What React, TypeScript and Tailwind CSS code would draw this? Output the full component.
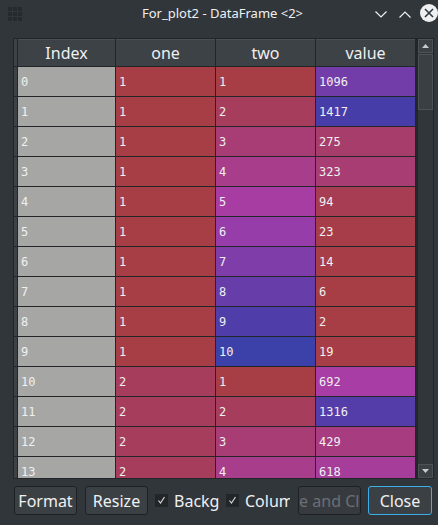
import React from 'react';

type Row = { idx: number; one: number; two: number; value: number };

const rows: Row[] = [
  { idx: 0, one: 1, two: 1, value: 1096 },
  { idx: 1, one: 1, two: 2, value: 1417 },
  { idx: 2, one: 1, two: 3, value: 275 },
  { idx: 3, one: 1, two: 4, value: 323 },
  { idx: 4, one: 1, two: 5, value: 94 },
  { idx: 5, one: 1, two: 6, value: 23 },
  { idx: 6, one: 1, two: 7, value: 14 },
  { idx: 7, one: 1, two: 8, value: 6 },
  { idx: 8, one: 1, two: 9, value: 2 },
  { idx: 9, one: 1, two: 10, value: 19 },
  { idx: 10, one: 2, two: 1, value: 692 },
  { idx: 11, one: 2, two: 2, value: 1316 },
  { idx: 12, one: 2, two: 3, value: 429 },
  { idx: 13, one: 2, two: 4, value: 618 },
];

// min / max of each column over the whole frame
const ranges = { one: [1, 10], two: [1, 10], value: [1, 1524] } as const;

function hsvToRgb(h: number, s: number, v: number): [number, number, number] {
  const i = Math.floor(h * 6);
  const f = h * 6 - i;
  const p = v * (1 - s);
  const q = v * (1 - f * s);
  const t = v * (1 - (1 - f) * s);
  switch (i % 6) {
    case 0: return [v, t, p];
    case 1: return [q, v, p];
    case 2: return [p, v, t];
    case 3: return [p, q, v];
    case 4: return [t, p, v];
    default: return [v, p, q];
  }
}

// same hue scale as the dataframe editor: largest = blue, smallest = red
const cellColor = (v: number, min: number, max: number) => {
  const hue = 0.66 + (0.33 * (max - v)) / (max - min);
  const [r, g, b] = hsvToRgb(hue, 0.7, 1);
  const mix = (c: number, base: number) => Math.round(c * 255 * 0.6 + base * 0.4);
  return `rgb(${mix(r, 35)}, ${mix(g, 38)}, ${mix(b, 41)})`;
};

const mono = { fontFamily: '"DejaVu Sans Mono", monospace' };

const Cell = ({ text, bg }: { text: number; bg?: string }) => (
  <div
    className="flex items-center pl-[3px] text-[12px] text-[#eff0f1] bg-[#a6a7a5]"
    style={{ ...mono, ...(bg ? { backgroundColor: bg } : {}) }}
  >
    {text}
  </div>
);

const Button = ({ label, w, focus, disabled }: { label: string; w: string; focus?: boolean; disabled?: boolean }) => (
  <div
    className={`${w} h-[29px] shrink-0 flex items-center justify-center overflow-hidden whitespace-nowrap rounded-[3px] border text-[16px] ${
      focus ? 'border-[#3daee9]' : 'border-[#1e2124]'
    } ${disabled ? 'bg-[#373b40] text-[#6b6f74]' : 'bg-[#3b4045] text-[#eff0f1]'}`}
  >
    {label}
  </div>
);

const Check = ({ label }: { label: string }) => (
  <div className="w-[64px] shrink-0 flex items-center">
    <div className="w-[13px] h-[13px] bg-[#232629] flex items-center justify-center shrink-0">
      <svg width="9" height="9" viewBox="0 0 9 9">
        <polyline points="1.5,4.5 3.5,7 7.5,1" fill="none" stroke="#d6d8da" strokeWidth="1.2" />
      </svg>
    </div>
    <div className="ml-[6px] w-[45px] overflow-hidden whitespace-nowrap text-[16px] text-[#eff0f1]">{label}</div>
  </div>
);

export default function App() {
  return (
    <div
      className="w-[438px] h-[525px] bg-[#31363b] flex flex-col overflow-hidden"
      style={{ fontFamily: '"Noto Sans", sans-serif' }}
    >
      {/* title bar */}
      <div className="h-[28px] shrink-0 flex items-center pl-[8px]">
        <div className="grid grid-cols-[4px_4px_4px] grid-rows-[4px_4px_4px] gap-px w-[16px] h-[14px]">
          {Array.from({ length: 9 }).map((_, i) => (
            <div key={i} className="bg-[#26292d]" />
          ))}
        </div>
        <div className="flex-1 pl-[46px] text-center text-[13px] text-[#eff0f1] whitespace-nowrap">
          For_plot2 - DataFrame &lt;2&gt;
        </div>
        <svg width="12" height="7" viewBox="0 0 12 7" className="shrink-0">
          <polyline points="0.5,0.5 6,6 11.5,0.5" fill="none" stroke="#eff0f1" strokeWidth="1.2" />
        </svg>
        <svg width="12" height="7" viewBox="0 0 12 7" className="shrink-0 ml-[12px]">
          <polyline points="0.5,6.5 6,1 11.5,6.5" fill="none" stroke="#eff0f1" strokeWidth="1.2" />
        </svg>
        <svg width="18" height="18" viewBox="0 0 18 18" className="shrink-0 ml-[9px] -mt-[2px]">
          <circle cx="9" cy="9" r="9" fill="#eff0f1" />
          <path d="M5 5 L13 13 M13 5 L5 13" stroke="#31363b" strokeWidth="1.6" />
        </svg>
      </div>

      {/* table */}
      <div className="mt-[10px] ml-[13px] mr-[4px] h-[441px] shrink-0 flex border border-[#232629] bg-[#232629]">
        <div className="w-[404px] flex flex-col overflow-hidden">
          <div className="grid grid-cols-[3px_97px_99px_99px_99px] gap-px h-[27px] shrink-0">
            <div className="bg-[#3d4247]" />
            {['Index', 'one', 'two', 'value'].map((h) => (
              <div
                key={h}
                className="bg-[#3d4247] border-t border-[#4a4f54] flex items-center justify-center text-[16px] text-[#eff0f1]"
              >
                {h}
              </div>
            ))}
          </div>
          <div className="mt-px flex-1 overflow-hidden">
            <div className="grid grid-cols-[3px_97px_99px_99px_99px] auto-rows-[29px] gap-px">
              {rows.map((r) => (
                <React.Fragment key={r.idx}>
                  <div className="bg-[#3d4247]" />
                  <Cell text={r.idx} />
                  <Cell text={r.one} bg={cellColor(r.one, ranges.one[0], ranges.one[1])} />
                  <Cell text={r.two} bg={cellColor(r.two, ranges.two[0], ranges.two[1])} />
                  <Cell text={r.value} bg={cellColor(r.value, ranges.value[0], ranges.value[1])} />
                </React.Fragment>
              ))}
            </div>
          </div>
        </div>

        {/* vertical scrollbar */}
        <div className="w-[15px] bg-[#31363b] flex flex-col">
          <div className="h-[14px] border border-[#4d5257] bg-[#3b4045] flex items-center justify-center">
            <svg width="7" height="4" viewBox="0 0 7 4">
              <polygon points="0,4 3.5,0 7,4" fill="#c8cacc" />
            </svg>
          </div>
          <div className="h-[56px] mt-px border border-[#4d5257] bg-[#3a3f44]" />
          <div className="flex-1" />
          <div className="h-[14px] border border-[#4d5257] bg-[#3b4045] flex items-center justify-center">
            <svg width="7" height="4" viewBox="0 0 7 4">
              <polygon points="0,0 3.5,4 7,0" fill="#c8cacc" />
            </svg>
          </div>
        </div>
      </div>

      {/* buttons */}
      <div className="mt-[7px] ml-[14px] flex items-center">
        <Button label="Format" w="w-[63px]" />
        <div className="ml-[8px]">
          <Button label="Resize" w="w-[63px]" />
        </div>
        <div className="ml-[7px]">
          <Check label="Background color" />
        </div>
        <div className="ml-[7px]">
          <Check label="Column min/max" />
        </div>
        <div className="ml-[8px]">
          <Button label="Save and Close" w="w-[63px]" disabled />
        </div>
        <div className="ml-[7px]">
          <Button label="Close" w="w-[64px]" focus />
        </div>
      </div>
    </div>
  );
}
